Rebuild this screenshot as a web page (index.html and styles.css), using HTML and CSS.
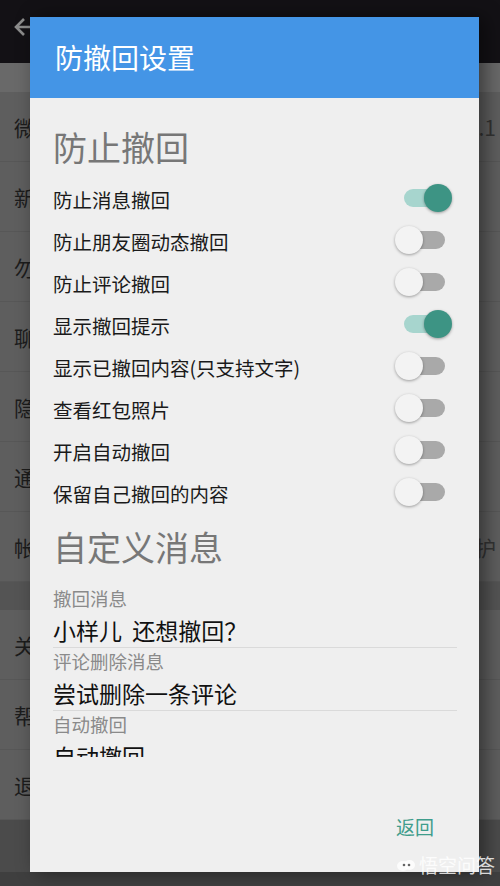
FILE: index.html
```html
<!DOCTYPE html>
<html lang="zh-CN">
<head>
    <meta charset="UTF-8">
    <meta name="viewport" content="width=device-width, initial-scale=1.0">
    <title>防撤回设置</title>
    <link rel="stylesheet" href="styles.css">
</head>
<body>
    <div class="screen">
        <div class="appbar">
            <svg class="back" width="24" height="24" viewBox="0 0 24 24">
                <path d="M20 12H5M12 4l-8 8 8 8" fill="none" stroke="#8c8c8c" stroke-width="2.6"/>
            </svg>
        </div>
        <div class="subhead"></div>
        <div class="group">
            <div class="item"><span>微信版本</span><span class="value">6.6.1</span></div>
            <div class="item"><span>新消息提醒</span></div>
            <div class="item"><span>勿扰模式</span></div>
            <div class="item"><span>聊天</span></div>
            <div class="item"><span>隐私</span></div>
            <div class="item"><span>通用</span></div>
            <div class="item"><span>帐号与安全</span><span class="value">已保护</span></div>
        </div>
        <div class="gap"></div>
        <div class="group">
            <div class="item"><span>关于微信</span></div>
            <div class="item"><span>帮助与反馈</span></div>
            <div class="item"><span>退出</span></div>
        </div>
    </div>

    <div class="dialog">
        <div class="dialog-title">防撤回设置</div>
        <div class="dialog-body">
            <div class="section">防止撤回</div>
            <div class="row"><span>防止消息撤回</span><span class="switch on"></span></div>
            <div class="row"><span>防止朋友圈动态撤回</span><span class="switch"></span></div>
            <div class="row"><span>防止评论撤回</span><span class="switch"></span></div>
            <div class="row"><span>显示撤回提示</span><span class="switch on"></span></div>
            <div class="row"><span>显示已撤回内容(只支持文字)</span><span class="switch"></span></div>
            <div class="row"><span>查看红包照片</span><span class="switch"></span></div>
            <div class="row"><span>开启自动撤回</span><span class="switch"></span></div>
            <div class="row"><span>保留自己撤回的内容</span><span class="switch"></span></div>

            <div class="section second">自定义消息</div>
            <div class="field">
                <div class="field-label">撤回消息</div>
                <div class="field-input">小样儿&nbsp; 还想撤回？</div>
            </div>
            <div class="field">
                <div class="field-label">评论删除消息</div>
                <div class="field-input">尝试删除一条评论</div>
            </div>
            <div class="field">
                <div class="field-label">自动撤回</div>
                <div class="field-input">自动撤回</div>
            </div>
        </div>
        <div class="dialog-actions">
            <span class="action">返回</span>
        </div>
    </div>

    <div class="watermark">
        <svg width="20" height="16" viewBox="0 0 20 16">
            <ellipse cx="7" cy="9" rx="6" ry="5" fill="rgba(255,255,255,0.8)"/>
            <ellipse cx="13.5" cy="8" rx="5.5" ry="5" fill="rgba(255,255,255,0.8)"/>
            <circle cx="8" cy="8" r="1.3" fill="#666"/>
            <circle cx="13" cy="8" r="1.3" fill="#666"/>
        </svg>
        <span>悟空问答</span>
    </div>
</body>
</html>
```

FILE: styles.css
```css
body {
    margin: 0;
    padding: 0;
    background-color: #3f3f3f;
    font-family: "Noto Sans CJK SC", "Noto Sans", sans-serif;
}

.screen {
    width: 500px;
    height: 872px;
    background-color: #4b4b4b;
    overflow: hidden;
}

.appbar {
    height: 63px;
    background-color: #131115;
    display: flex;
    align-items: center;
    padding-left: 12px;
    padding-bottom: 10px;
    box-sizing: border-box;
}

.subhead {
    height: 29px;
    background-color: #696969;
}

.group {
    background-color: #5e5e5e;
}

.item {
    height: 70px;
    display: flex;
    align-items: center;
    justify-content: space-between;
    padding: 0 4px 0 14px;
    border-bottom: 1px solid #575757;
    box-sizing: border-box;
    font-size: 21px;
    color: #1c1c1c;
}

.item .value {
    color: #333;
}

.gap {
    height: 28px;
    background-color: #545454;
}

.dialog {
    position: absolute;
    top: 17px;
    left: 30px;
    width: 449px;
    height: 855px;
    background-color: #efefef;
    box-shadow: 6px 0 18px rgba(0, 0, 0, 0.45);
    display: flex;
    flex-direction: column;
}

.dialog-title {
    height: 81px;
    background-color: #4495e6;
    color: #fff;
    font-size: 28px;
    padding-left: 25px;
    display: flex;
    align-items: center;
    box-sizing: border-box;
    padding-bottom: 2px;
}

.dialog-body {
    height: 659px;
    overflow: hidden;
    padding: 25px 22px 0 23px;
    box-sizing: border-box;
}

.section {
    font-size: 34px;
    line-height: 48px;
    color: #777;
    margin-bottom: 7px;
}

.section.second {
    margin-top: 9px;
    margin-bottom: 15px;
}

.row {
    height: 42px;
    display: flex;
    align-items: center;
    justify-content: space-between;
    font-size: 19.5px;
    color: #1a1a1a;
}

.switch {
    position: relative;
    width: 57px;
    height: 28px;
    margin-right: 5px;
    margin-top: -3px;
}

.switch::before {
    content: "";
    position: absolute;
    left: 9px;
    top: 5px;
    width: 41px;
    height: 18px;
    border-radius: 9px;
    background-color: #a9a9a9;
}

.switch::after {
    content: "";
    position: absolute;
    left: 0;
    top: 0;
    width: 28px;
    height: 28px;
    border-radius: 50%;
    background-color: #f3f3f3;
    box-shadow: 0 1px 3px rgba(0, 0, 0, 0.35);
}

.switch.on::before {
    background-color: #a7d5ce;
}

.switch.on::after {
    left: 29px;
    background-color: #3d9484;
}

.field-label {
    font-size: 18.5px;
    line-height: 24px;
    color: #8a8a8a;
}

.field-input {
    font-size: 23px;
    line-height: 34px;
    padding-top: 3px;
    margin-bottom: 1px;
    color: #111;
    border-bottom: 1px solid #dadada;
}

.dialog-actions {
    flex: 1;
    display: flex;
    justify-content: flex-end;
    align-items: flex-start;
    padding: 58px 45px 0 0;
}

.action {
    font-size: 19px;
    line-height: 24px;
    color: #3f9d8c;
}

.watermark {
    position: absolute;
    left: 396px;
    top: 854px;
    display: flex;
    align-items: center;
    gap: 3px;
    white-space: nowrap;
    font-size: 19px;
    line-height: 22px;
    color: rgba(255, 255, 255, 0.82);
}
```
